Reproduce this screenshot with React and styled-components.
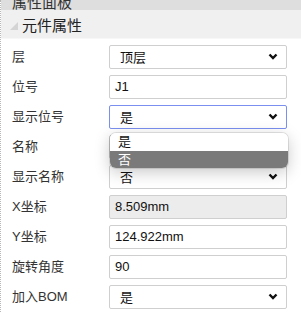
import React from 'react';
import styled, { createGlobalStyle } from 'styled-components';

const Global = createGlobalStyle`
  html, body {
    margin: 0;
    background: #fff;
    font-family: "Liberation Sans", "Noto Sans CJK SC", sans-serif;
  }
`;

const Panel = styled.div`
  width: 301px;
  height: 312px;
  border-left: 1px dotted #b8b8b8;
  box-sizing: border-box;
  overflow: hidden;
`;

const TopBar = styled.div`
  height: 10px;
  background: #dedede;
  display: flex;
  align-items: flex-end;
  overflow: hidden;
  padding-left: 11px;
  font-size: 15px;
  line-height: 14px;
  color: #333;
`;

const SectionHead = styled.div`
  height: 28px;
  background: #f0f0f0;
  display: flex;
  align-items: center;
  padding-left: 9px;
  gap: 4px;
  font-size: 15px;
  color: #222;
  border-bottom: 1px solid #f7f7f7;
`;

const Triangle = styled.span`
  width: 0;
  height: 0;
  border-left: 8px solid transparent;
  border-bottom: 8px solid #d4d4d4;
  margin-top: 3px;
`;

const Rows = styled.div`
  padding: 5px 0 0 0;
`;

const Row = styled.div`
  display: grid;
  grid-template-columns: 97px 178px;
  align-items: center;
  height: 30px;
  padding-left: 11px;
  position: relative;
`;

const Label = styled.span`
  font-size: 13px;
  color: #333;
  margin-top: -8px;
`;

const Field = styled.div`
  height: 24px;
  box-sizing: border-box;
  border: 1px solid ${p => (p.$focus ? '#7a8ff0' : '#cfcfcf')};
  border-radius: 2px;
  background: ${p => (p.$disabled ? '#ececec' : '#fff')};
  display: flex;
  align-items: center;
  justify-content: space-between;
  padding: 0 ${p => (p.$select ? '8px 0 10px' : '0 0 5px')};
  font-size: 13px;
  color: #111;
  margin-top: -5px;
`;

const Menu = styled.div`
  position: absolute;
  left: 109px;
  top: 29px;
  width: 178px;
  height: 35px;
  border-radius: 6px;
  overflow: hidden;
  background: #fff;
  box-shadow: 0 4px 16px rgba(0, 0, 0, 0.22), 0 0 0 1px rgba(0, 0, 0, 0.1);
  z-index: 2;
`;

const Option = styled.div`
  height: 17.5px;
  line-height: 17px;
  padding-left: 8px;
  font-size: 13px;
  background: ${p => (p.$active ? '#7a7a7a' : '#fff')};
  color: ${p => (p.$active ? '#fff' : '#111')};
`;

const Chevron = () => (
  <svg width="10" height="7" viewBox="0 0 10 7">
    <path d="M1.5 1.5 L5 5 L8.5 1.5" fill="none" stroke="#111" strokeWidth="2.4" />
  </svg>
);

const Select = ({ value, focus }) => (
  <Field $select $focus={focus}>
    <span>{value}</span>
    <Chevron />
  </Field>
);

const Input = ({ value, disabled }) => (
  <Field $disabled={disabled}>{value}</Field>
);

export default function App() {
  return (
    <Panel>
      <Global />
      <TopBar>属性面板</TopBar>
      <SectionHead>
        <Triangle />
        元件属性
      </SectionHead>
      <Rows>
        <Row><Label>层</Label><Select value="顶层" /></Row>
        <Row><Label>位号</Label><Input value="J1" /></Row>
        <Row>
          <Label>显示位号</Label>
          <Select value="是" focus />
          <Menu>
            <Option>是</Option>
            <Option $active>否</Option>
          </Menu>
        </Row>
        <Row><Label>名称</Label><Input value="" /></Row>
        <Row><Label>显示名称</Label><Select value="否" /></Row>
        <Row><Label>X坐标</Label><Input value="8.509mm" disabled /></Row>
        <Row><Label>Y坐标</Label><Input value="124.922mm" /></Row>
        <Row><Label>旋转角度</Label><Input value="90" /></Row>
        <Row><Label>加入BOM</Label><Select value="是" /></Row>
      </Rows>
    </Panel>
  );
}
